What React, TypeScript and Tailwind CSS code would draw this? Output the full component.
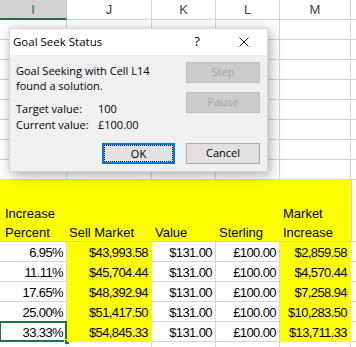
import React from 'react';

const SHEET_FONT = { fontFamily: '"Liberation Sans", Arial, sans-serif' };
const UI_FONT = { fontFamily: '"Open Sans", "Noto Sans", sans-serif' };

const rows = [
  ['6.95%', '$43,993.58', '$131.00', '£100.00', '$2,859.58'],
  ['11.11%', '$45,704.44', '$131.00', '£100.00', '$4,570.44'],
  ['17.65%', '$48,392.94', '$131.00', '£100.00', '$7,258.94'],
  ['25.00%', '$51,417.50', '$131.00', '£100.00', '$10,283.50'],
  ['33.33%', '$54,845.33', '$131.00', '£100.00', '$13,711.33'],
];

// widths of columns I, J, K, L, M and the sliver of N
const widthClass = ['w-[67px]', 'w-[85px]', 'w-[64px]', 'w-[64px]', 'w-[71px]', 'w-[60px]'];
const dataYellow = [false, true, false, false, true, false];

const App = () => {
  return (
    <div className="relative w-[356px] h-[347px] overflow-hidden bg-white text-black" style={SHEET_FONT}>
      {/* column headers */}
      <div className="flex h-[20px] text-[13px] leading-[19px] text-[#444]">
        <div className="w-[67px] shrink-0 bg-[#d2d2d2] border-r border-[#c6c6c6] border-b-2 border-b-[#217346] text-center text-[#217346]">I</div>
        <div className="w-[85px] shrink-0 border-r border-b border-[#d4d4d4] text-center">J</div>
        <div className="w-[64px] shrink-0 border-r border-b border-[#d4d4d4] text-center">K</div>
        <div className="w-[64px] shrink-0 border-r border-b border-[#d4d4d4] text-center">L</div>
        <div className="w-[71px] shrink-0 border-r border-b border-[#d4d4d4] text-center">M</div>
        <div className="w-[60px] shrink-0 border-b border-[#d4d4d4]" />
      </div>

      {/* empty rows */}
      {[...Array(8)].map((_, r) => (
        <div key={r} className="flex h-[20px]">
          {widthClass.map((w, c) => (
            <div key={c} className={`${w} shrink-0 border-r border-b border-[#d4d4d4]`} />
          ))}
        </div>
      ))}

      {/* yellow heading block */}
      <div className="flex text-[13px]">
        <div className="w-[352px] shrink-0 flex flex-col bg-[#ffff00] border-r border-b border-[#d4d4d4]">
          <div className="h-[21px]" />
          <div className="flex h-[21px] items-end leading-[16px]">
            <div className="w-[67px] shrink-0 pl-[5px]">Increase</div>
            <div className="w-[85px] shrink-0" />
            <div className="w-[64px] shrink-0" />
            <div className="w-[64px] shrink-0" />
            <div className="w-[71px] shrink-0 pl-[3px]">Market</div>
          </div>
          <div className="flex h-[19px] items-end leading-[16px]">
            <div className="w-[67px] shrink-0 pl-[5px]">Percent</div>
            <div className="w-[85px] shrink-0 pl-[2px]">Sell Market</div>
            <div className="w-[64px] shrink-0 pl-[3px]">Value</div>
            <div className="w-[64px] shrink-0 pl-[3px]">Sterling</div>
            <div className="w-[71px] shrink-0 pl-[3px]">Increase</div>
          </div>
        </div>
        <div className="w-[60px] shrink-0 border-b border-[#d4d4d4]" />
      </div>

      {/* data rows */}
      {rows.map((row, r) => (
        <div key={r} className="flex h-[20px] text-[13px] leading-[16px] tracking-[-0.6px]">
          {row.map((v, c) => (
            <div
              key={c}
              className={`${widthClass[c]} relative shrink-0 flex items-end justify-end pr-[3px] border-r border-b ${
                dataYellow[c] ? 'bg-[#ffff00] border-[#ffff00]' : 'border-[#d4d4d4]'
              }`}
            >
              {v}
              {r === 4 && c === 0 && (
                <>
                  <div className="absolute -left-[1px] -top-[1px] -right-[1px] -bottom-[1px] border-2 border-[#217346]" />
                  <div className="absolute -right-[4px] -bottom-[4px] w-[6px] h-[6px] bg-[#217346] border border-white" />
                </>
              )}
            </div>
          ))}
          <div className="w-[60px] shrink-0 border-b border-[#d4d4d4]" />
        </div>
      ))}

      {/* trailing partial row */}
      <div className="flex h-[20px]">
        {widthClass.map((w, c) => (
          <div key={c} className={`${w} shrink-0 border-r border-[#d4d4d4]`} />
        ))}
      </div>

      <GoalSeekDialog />
    </div>
  );
};

const GoalSeekDialog = () => (
  <div
    className="absolute left-[9px] top-[28px] w-[259px] h-[144px] flex flex-col bg-[#f0f0f0] border border-[#d6d6d6] shadow-[2px_3px_12px_rgba(0,0,0,0.35)] text-[11px] text-black"
    style={UI_FONT}
  >
    {/* title bar */}
    <div className="h-[26px] shrink-0 flex items-center bg-white pl-[3px]">
      <span className="flex-1 text-[11.5px]">Goal Seek Status</span>
      <span className="w-[8px] text-[13px] text-center">?</span>
      <svg className="ml-[38px] mr-[18px]" width="10" height="10" viewBox="0 0 10 10">
        <path d="M0.5 0.5 L9.5 9.5 M9.5 0.5 L0.5 9.5" stroke="#111" strokeWidth="1" />
      </svg>
    </div>

    {/* body */}
    <div className="flex flex-col pt-[7px] pl-[6px] pr-[7px]">
      <div className="flex h-[74px]">
        <div className="flex-1 pt-[1px]">
          <div className="leading-[15px]">Goal Seeking with Cell L14</div>
          <div className="leading-[15px]">found a solution.</div>
          <div className="flex mt-[8px] leading-[16px]">
            <span className="w-[82px]">Target value:</span>
            <span>100</span>
          </div>
          <div className="flex leading-[16px]">
            <span className="w-[82px]">Current value:</span>
            <span>£100.00</span>
          </div>
        </div>
        <div className="flex flex-col gap-[9px]">
          <div className="w-[74px] h-[21px] flex items-center justify-center bg-[#cccccc] border border-[#bfbfbf] text-[#a3a3a3]">Step</div>
          <div className="w-[74px] h-[21px] flex items-center justify-center bg-[#cccccc] border border-[#bfbfbf] text-[#a3a3a3]">Pause</div>
        </div>
      </div>
      <div className="flex justify-end gap-[11px] mt-[7px]">
        <div className="w-[73px] h-[21px] p-[1px] bg-[#e1e1e1] border border-[#0078d7] outline outline-1 outline-[#0078d7] -outline-offset-2">
          <div className="w-full h-full flex items-center justify-center border border-dotted border-black leading-none">OK</div>
        </div>
        <div className="w-[74px] h-[21px] flex items-center justify-center bg-[#e1e1e1] border border-[#adadad]">Cancel</div>
      </div>
    </div>
  </div>
);

export default App;
